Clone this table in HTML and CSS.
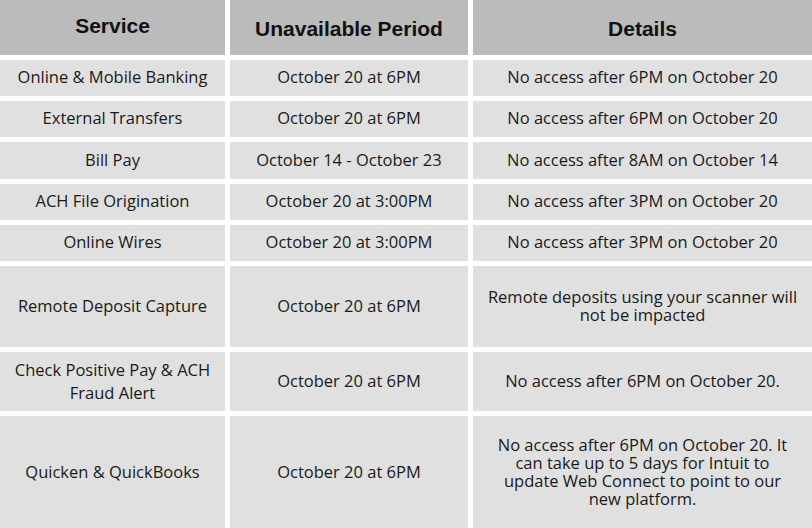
FILE: index.html
```html
<!DOCTYPE html>
<html lang="en">
<head>
<meta charset="utf-8">
<title>Service Unavailability</title>
<link rel="stylesheet" href="styles.css">
</head>
<body>
<div class="table">
  <div class="cell head head-high">Service</div>
  <div class="cell head">Unavailable Period</div>
  <div class="cell head">Details</div>

  <div class="cell">Online &amp; Mobile Banking</div>
  <div class="cell">October 20 at 6PM</div>
  <div class="cell">No access after 6PM on October 20</div>

  <div class="cell">External Transfers</div>
  <div class="cell">October 20 at 6PM</div>
  <div class="cell">No access after 6PM on October 20</div>

  <div class="cell">Bill Pay</div>
  <div class="cell">October 14 - October 23</div>
  <div class="cell">No access after 8AM on October 14</div>

  <div class="cell">ACH File Origination</div>
  <div class="cell">October 20 at 3:00PM</div>
  <div class="cell">No access after 3PM on October 20</div>

  <div class="cell">Online Wires</div>
  <div class="cell">October 20 at 3:00PM</div>
  <div class="cell">No access after 3PM on October 20</div>

  <div class="cell">Remote Deposit Capture</div>
  <div class="cell">October 20 at 6PM</div>
  <div class="cell">Remote deposits using your scanner will<br>not be impacted</div>

  <div class="cell loose">Check Positive Pay &amp; ACH<br>Fraud Alert</div>
  <div class="cell">October 20 at 6PM</div>
  <div class="cell">No access after 6PM on October 20.</div>

  <div class="cell">Quicken &amp; QuickBooks</div>
  <div class="cell">October 20 at 6PM</div>
  <div class="cell">No access after 6PM on October 20. It<br>can take up to 5 days for Intuit to<br>update Web Connect to point to our<br>new platform.</div>
</div>
</body>
</html>
```
FILE: styles.css
```css
html, body {
  margin: 0;
  padding: 0;
  background: #ffffff;
}

body {
  width: 812px;
  height: 528px;
  overflow: hidden;
}

.table {
  display: grid;
  grid-template-columns: 225px 238px 1fr;
  grid-template-rows: 55px 36px 36px 37px 36px 36px 81px 59px 113px;
  gap: 5px;
}

.cell {
  background: #e0e0e0;
  color: #1a1a1a;
  font-family: "Open Sans", "Noto Sans", sans-serif;
  font-size: 16.5px;
  line-height: 18px;
  display: flex;
  align-items: center;
  justify-content: center;
  text-align: center;
  padding: 0 2px 2px;
  white-space: nowrap;
}

.head {
  background: #bbbbbb;
  color: #111111;
  font-family: "Liberation Sans", Arial, sans-serif;
  font-weight: bold;
  font-size: 21px;
  padding: 3px 0 0;
}

.head-high {
  padding: 0 0 3px;
}

.loose {
  line-height: 23px;
}
```
